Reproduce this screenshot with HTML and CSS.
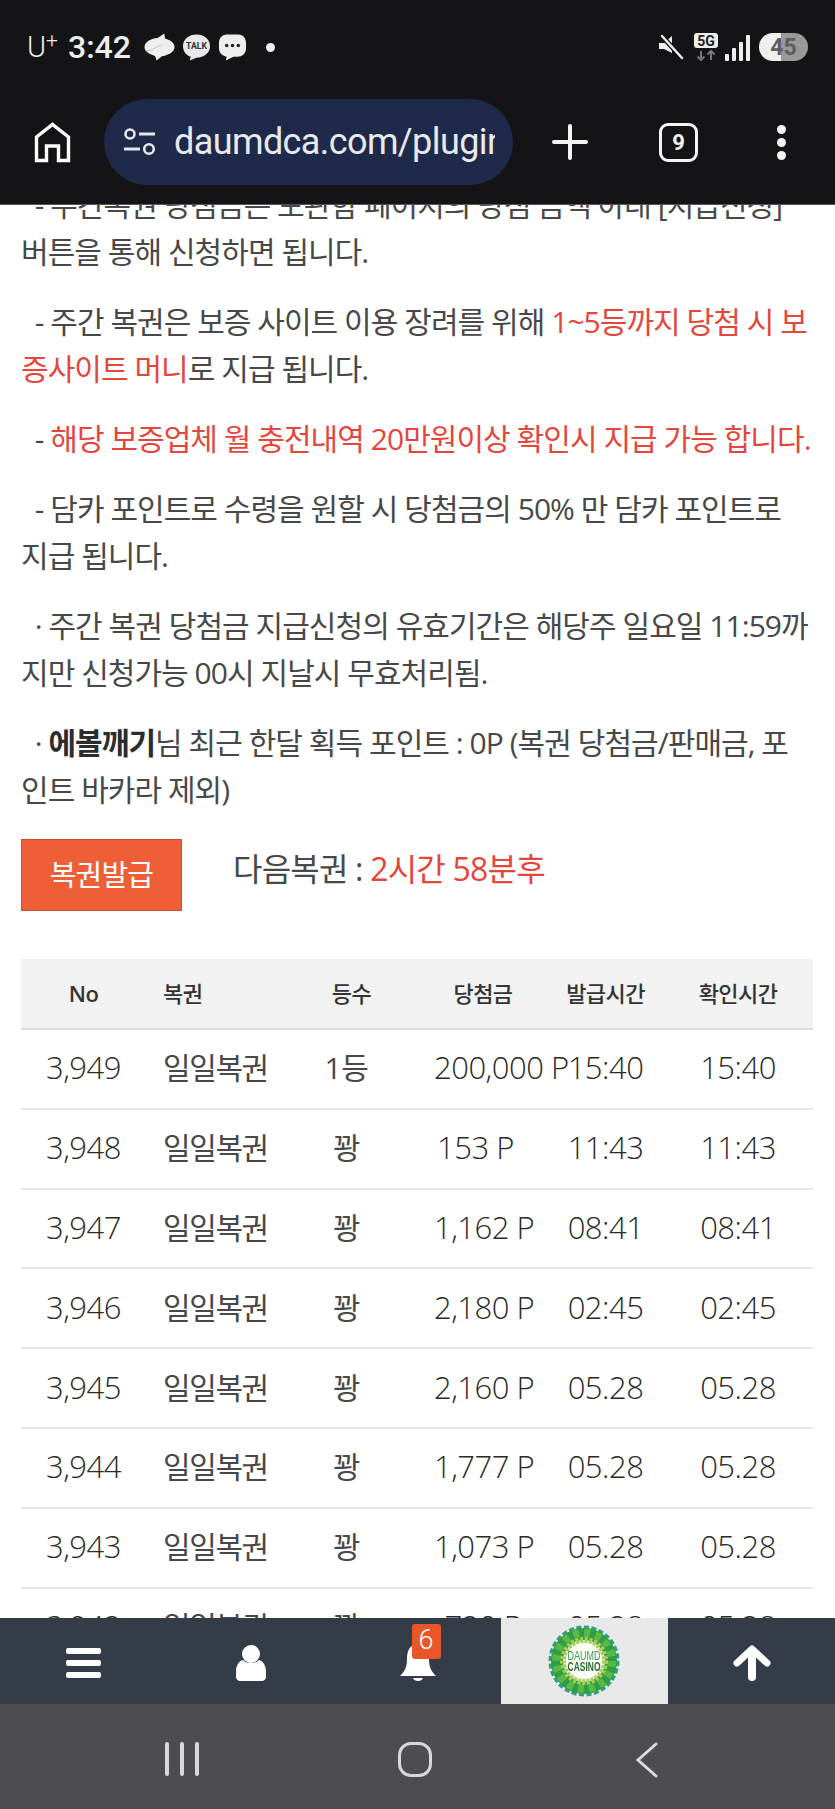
FILE: index.html
```html
<!DOCTYPE html>
<html lang="ko">
<head>
    <meta charset="UTF-8">
    <meta name="viewport" content="width=device-width, initial-scale=1.0">
    <title>복권</title>
    <link rel="stylesheet" href="styles.css">
</head>
<body>
    <div class="top-chrome">
        <div class="status-bar">
            <div class="status-left">
                <span class="carrier">U<sup>+</sup></span>
                <span class="clock">3:42</span>
                <svg class="notify-icon" width="31" height="30" viewBox="0 0 32 30"><ellipse cx="16" cy="15" rx="15.500" ry="9.500" fill="#eee"/><path d="M21 1 L9 9 L22 9 Z M13 29 L24 20 L10 20 Z" fill="#eee"/><path d="M3 19 C9 19 13 14 18 13" fill="none" stroke="#bbb" stroke-width="0.800"/></svg>
                <svg class="notify-icon" width="29" height="30" viewBox="0 0 30 30"><path d="M15 2 C7 2 1 7 1 14 C1 20 5 24 9 25 L8 29 L15 26 C23 26 29 21 29 14 C29 7 23 2 15 2 Z" fill="#e8e8e8"/><text x="15" y="17.5" class="talk-text">TALK</text></svg>
                <svg class="notify-icon" width="29" height="30" viewBox="0 0 30 30"><path d="M9 2 H21 C26 2 29 6 29 11 V16 C29 22 25 25 20 25 H16 L8 29 L9 25 C4 24 1 21 1 16 V11 C1 6 4 2 9 2 Z" fill="#eee"/><circle cx="9" cy="13.5" r="1.8" fill="#222"/><circle cx="15" cy="13.5" r="1.8" fill="#222"/><circle cx="21" cy="13.5" r="1.8" fill="#222"/></svg>
                <span class="status-dot"></span>
            </div>
            <div class="status-right">
                <svg width="26" height="26" viewBox="0 0 26 26"><path d="M1 9 H6 L14 2 V19 L6 15 H1 Z M17 7 V15" fill="#eee"/><path d="M3 1 L25 25" stroke="#141416" stroke-width="5"/><path d="M4 2 L24 24" stroke="#eee" stroke-width="2.5" stroke-linecap="round"/></svg>
                <svg class="net-icon" width="26" height="28" viewBox="0 0 26 28"><rect x="1" y="0" width="24" height="15" rx="3" fill="#eee"/><text x="13" y="12.500" class="net-text">5G</text><path d="M8 18 V27 M4.5 23.5 L8 27 L11.5 23.5 M18 27 V18 M14.500 21.500 L18 18 L21.500 21.500" stroke="#777" stroke-width="2" fill="none"/></svg>
                <svg class="signal-icon" width="26" height="27" viewBox="0 0 26 27"><rect x="0" y="20" width="4" height="7" rx="1" fill="#eee"/><rect x="7" y="14" width="4" height="13" rx="1" fill="#eee"/><rect x="14" y="8" width="4" height="19" rx="1" fill="#eee"/><rect x="21" y="1" width="4" height="26" rx="1" fill="#eee"/></svg>
                <div class="battery"><span class="battery-num">45</span></div>
            </div>
        </div>
        <div class="url-bar">
            <svg class="home-icon" width="37" height="41" viewBox="0 0 37 41"><path d="M2.500 38.500 V15 L18.500 2.500 L34.500 15 V38.500 H24.500 V24 H12.500 V38.500 Z" fill="none" stroke="#fff" stroke-width="3.400" stroke-linejoin="miter"/></svg>
            <div class="url-pill">
                <svg class="tune-icon" width="34" height="30" viewBox="0 0 34 30"><circle cx="7" cy="7" r="4.500" fill="none" stroke="#e6e8ef" stroke-width="2.600"/><path d="M16 7 H32 M1 22 H17" stroke="#e6e8ef" stroke-width="2.800"/><circle cx="26" cy="22" r="4.800" fill="none" stroke="#e6e8ef" stroke-width="2.600"/></svg>
                <span class="url-text">daumdca.com/plugin/lotto</span>
            </div>
            <svg class="plus-icon" width="36" height="36" viewBox="0 0 36 36"><path d="M18 2 V34 M2 18 H34" stroke="#f4f4f4" stroke-width="4" stroke-linecap="round"/></svg>
            <div class="tab-count">9</div>
            <div class="more-dots"><span></span><span></span><span></span></div>
        </div>
    </div>

    <div class="content-wrap">
        <div class="content">
            <p>&nbsp;&nbsp;- 주간복권 당첨금은 보관함 페이지의 당첨 금액 아래 [지급신청]<br>버튼을 통해 신청하면 됩니다.</p>
            <p>&nbsp;&nbsp;- 주간 복권은 보증 사이트 이용 장려를 위해 <span class="red">1~5등까지 당첨 시 보증사이트 머니</span>로 지급 됩니다.</p>
            <p>&nbsp;&nbsp;- <span class="red">해당 보증업체 월 충전내역 20만원이상 확인시 지급 가능 합니다.</span></p>
            <p>&nbsp;&nbsp;- 담카 포인트로 수령을 원할 시 당첨금의 50% 만 담카 포인트로<br>지급 됩니다.</p>
            <p>&nbsp;&nbsp;· 주간 복권 당첨금 지급신청의 유효기간은 해당주 일요일 11:59까지만 신청가능 00시 지날시 무효처리됨.</p>
            <p>&nbsp;&nbsp;· <b>에볼깨기</b>님 최근 한달 획득 포인트 : 0P (복권 당첨금/판매금, 포<br>인트 바카라 제외)</p>

            <div class="issue-row">
                <button class="issue-btn">복권발급</button>
                <div class="next-lotto">다음복권 : <span class="red">2시간 58분후</span></div>
            </div>

            <table class="lotto-table">
                <colgroup>
                    <col class="c-no"><col class="c-name"><col class="c-rank"><col class="c-prize"><col class="c-issued"><col class="c-checked">
                </colgroup>
                <thead>
                    <tr><th>No</th><th class="name">복권</th><th>등수</th><th class="prize">당첨금</th><th>발급시간</th><th class="checked">확인시간</th></tr>
                </thead>
                <tbody>
                    <tr><td>3,949</td><td class="name">일일복권</td><td>1등</td><td class="prize">200,000 P</td><td>15:40</td><td class="checked">15:40</td></tr>
                    <tr><td>3,948</td><td class="name">일일복권</td><td>꽝</td><td class="prize">153 P&nbsp;&nbsp;</td><td>11:43</td><td class="checked">11:43</td></tr>
                    <tr><td>3,947</td><td class="name">일일복권</td><td>꽝</td><td class="prize">1,162 P</td><td>08:41</td><td class="checked">08:41</td></tr>
                    <tr><td>3,946</td><td class="name">일일복권</td><td>꽝</td><td class="prize">2,180 P</td><td>02:45</td><td class="checked">02:45</td></tr>
                    <tr><td>3,945</td><td class="name">일일복권</td><td>꽝</td><td class="prize">2,160 P</td><td>05.28</td><td class="checked">05.28</td></tr>
                    <tr><td>3,944</td><td class="name">일일복권</td><td>꽝</td><td class="prize">1,777 P</td><td>05.28</td><td class="checked">05.28</td></tr>
                    <tr><td>3,943</td><td class="name">일일복권</td><td>꽝</td><td class="prize">1,073 P</td><td>05.28</td><td class="checked">05.28</td></tr>
                    <tr><td>3,942</td><td class="name">일일복권</td><td>꽝</td><td class="prize">720 P</td><td>05.28</td><td class="checked">05.28</td></tr>
                </tbody>
            </table>
        </div>
    </div>

    <div class="bottom-bar">
        <div class="bar-cell">
            <div class="hamburger"><span></span><span></span><span></span></div>
        </div>
        <div class="bar-cell">
            <svg width="30" height="36" viewBox="0 0 30 36"><circle cx="15" cy="9" r="9" fill="#fff"/><path d="M7 15 C10 19 20 19 23 15 C27 16 30 20 30 27 V32 C30 34 28 36 26 36 H4 C2 36 0 34 0 32 V27 C0 20 3 16 7 15 Z" fill="#fff"/></svg>
        </div>
        <div class="bar-cell">
            <div class="bell-wrap">
                <svg width="36" height="38" viewBox="0 0 36 38"><path d="M18 0 C9 0 7 8 7 15 C7 23 5 27 0 32 H36 C31 27 29 23 29 15 C29 8 27 0 18 0 Z" fill="#fff"/><path d="M13 34 C14 38 22 38 23 34 Z" fill="#fff"/></svg>
                <span class="badge">6</span>
            </div>
        </div>
        <div class="bar-cell logo-cell">
            <svg class="logo" width="72" height="72" viewBox="0 0 72 72">
                <circle cx="36" cy="36" r="33.500" fill="none" stroke="#2f9f86" stroke-width="4" stroke-dasharray="5 2.500"/>
                <circle cx="36" cy="36" r="27" fill="none" stroke="#2f9d45" stroke-width="12"/>
                <circle cx="36" cy="36" r="28" fill="none" stroke="#5ab845" stroke-width="8" stroke-dasharray="6 5"/>
                <circle cx="36" cy="36" r="21" fill="none" stroke="#a9cf52" stroke-width="6" stroke-dasharray="3 1.500"/>
                <circle cx="36" cy="36" r="18" fill="#fbfdf5"/>
                <text x="36" y="35" class="logo-text light" textLength="33" lengthAdjust="spacingAndGlyphs">DAUMD</text>
                <text x="36" y="46" class="logo-text" textLength="33" lengthAdjust="spacingAndGlyphs">CASINO</text>
            </svg>
        </div>
        <div class="bar-cell">
            <svg width="38" height="36" viewBox="0 0 38 36"><path d="M4 18 L19 4 L34 18" fill="none" stroke="#fff" stroke-width="7" stroke-linecap="round" stroke-linejoin="round"/><path d="M19 8 V32" stroke="#fff" stroke-width="8" stroke-linecap="round"/></svg>
        </div>
    </div>

    <div class="nav-bar">
        <div class="nav-recent"><span></span><span></span><span></span></div>
        <div class="nav-home"></div>
        <svg width="24" height="36" viewBox="0 0 24 36"><path d="M21 2 L3 18 L21 34" fill="none" stroke="#dcdcdc" stroke-width="3" stroke-linecap="round" stroke-linejoin="miter"/></svg>
    </div>
</body>
</html>
```

FILE: styles.css
```css
* {
    margin: 0;
    padding: 0;
    box-sizing: border-box;
}

html, body {
    height: 1809px;
    overflow: hidden;
}

body {
    font-family: "Open Sans", "Noto Sans CJK KR", sans-serif;
    background: #fff;
    color: #484848;
    display: flex;
    flex-direction: column;
}

.red {
    color: #e5463b;
}

/* phone + browser top */
.top-chrome {
    height: 205px;
    flex-shrink: 0;
    background: #141416;
    border-bottom: 1px solid #555;
}

.status-bar {
    height: 99px;
    padding: 31px 27px 0;
    display: flex;
    justify-content: space-between;
    align-items: flex-start;
}

.status-left {
    display: flex;
    align-items: center;
    height: 32px;
    color: #eee;
    font-family: Roboto, sans-serif;
}

.carrier {
    font-size: 29px;
    font-weight: 300;
    margin-right: 10px;
}

.carrier sup {
    font-size: 21px;
    line-height: 0;
    vertical-align: 10px;
}

.clock {
    font-size: 32px;
    font-weight: 500;
    margin-right: 13px;
}

.notify-icon {
    margin-right: 7px;
}

.talk-text {
    font-family: Roboto, sans-serif;
    font-size: 9px;
    font-weight: 700;
    text-anchor: middle;
    fill: #333;
}

.status-dot {
    width: 9px;
    height: 9px;
    border-radius: 50%;
    background: #eee;
    margin-left: 12px;
}

.status-right {
    display: flex;
    align-items: center;
    height: 32px;
    gap: 6px;
}

.net-icon {
    margin-left: 3px;
}

.net-text {
    font-family: Roboto, sans-serif;
    font-size: 14px;
    font-weight: 700;
    text-anchor: middle;
    fill: #222;
}

.battery {
    width: 49px;
    height: 28px;
    margin-left: 2px;
    border-radius: 14px;
    background: linear-gradient(90deg, #eee 0, #eee 44%, #999 44%, #999 100%);
    display: flex;
    align-items: center;
    justify-content: center;
}

.battery-num {
    font-family: Roboto, sans-serif;
    font-size: 23px;
    font-weight: 700;
    color: #5d5d60;
}

.url-bar {
    height: 86px;
    display: flex;
    align-items: center;
}

.home-icon {
    margin-left: 34px;
    margin-right: 33px;
}

.url-pill {
    width: 409px;
    height: 86px;
    border-radius: 43px;
    background: #1f2a4a;
    padding-left: 19px;
    padding-right: 18px;
    display: flex;
    align-items: center;
    overflow: hidden;
}

.tune-icon {
    flex-shrink: 0;
    margin-right: 17px;
}

.url-text {
    font-family: Roboto, sans-serif;
    font-size: 36px;
    letter-spacing: -0.6px;
    color: #e8eaf0;
    white-space: nowrap;
    overflow: hidden;
}

.plus-icon {
    margin-left: 39px;
}

.tab-count {
    width: 39px;
    height: 39px;
    margin-left: 71px;
    border: 3px solid #f4f4f4;
    border-radius: 9px;
    color: #f4f4f4;
    font-family: Roboto, sans-serif;
    font-size: 22px;
    font-weight: 700;
    display: flex;
    align-items: center;
    justify-content: center;
}

.more-dots {
    margin-left: 79px;
    display: flex;
    flex-direction: column;
    gap: 4px;
}

.more-dots span {
    width: 9px;
    height: 9px;
    border-radius: 50%;
    background: #f4f4f4;
}

/* page */
.content-wrap {
    flex: 1;
    overflow: hidden;
}

.content {
    margin-top: -24px;
    padding: 0 21px;
    font-size: 30px;
    font-weight: 400;
    line-height: 47px;
    letter-spacing: -0.95px;
}

.content p {
    margin-bottom: 23px;
}

.content b {
    font-weight: 700;
    color: #2c2c2c;
}

.issue-row {
    margin-top: 26px;
    display: flex;
    align-items: flex-start;
}

.issue-btn {
    width: 161px;
    height: 72px;
    padding-bottom: 4px;
    background: #ee5f37;
    border: 1px solid #c9512f;
    color: #fff;
    font-family: inherit;
    font-size: 29px;
    font-weight: 400;
    letter-spacing: -0.8px;
}

.next-lotto {
    margin-left: 51px;
    font-size: 32px;
    line-height: 60px;
    letter-spacing: -0.8px;
}

.lotto-table {
    margin-top: 48px;
    width: 792px;
    border-collapse: collapse;
    table-layout: fixed;
    letter-spacing: -0.5px;
}

.c-no { width: 125px; }
.c-name { width: 145px; }
.c-rank { width: 121px; }
.c-prize { width: 120px; }
.c-issued { width: 147px; }
.c-checked { width: 134px; }

.lotto-table th {
    height: 70px;
    background: #f2f2f2;
    border-bottom: 2px solid #ddd;
    color: #333;
    font-size: 22px;
    font-weight: 500;
    text-align: center;
    letter-spacing: -0.6px;
}

.lotto-table th:first-child {
    font-weight: 600;
}

.lotto-table td {
    height: 79.8px;
    padding-bottom: 2px;
    border-bottom: 2px solid #e6e6e6;
    color: #2a2a2a;
    font-size: 31px;
    font-weight: 300;
    text-align: center;
    white-space: nowrap;
}

.lotto-table td:nth-child(3) {
    padding-right: 10px;
    color: #484848;
    font-size: 30px;
    font-weight: 400;
}

.lotto-table .name {
    text-align: left;
    padding-left: 17px;
}

.lotto-table td.name {
    color: #484848;
    font-size: 30px;
    font-weight: 400;
    letter-spacing: -1.4px;
}

.lotto-table .prize {
    padding-left: 22px;
}

.lotto-table .checked {
    padding-right: 16px;
}

/* site bottom menu */
.bottom-bar {
    height: 86px;
    flex-shrink: 0;
    background: #343c47;
    display: flex;
    position: relative;
}

.bar-cell {
    width: 167px;
    display: flex;
    align-items: center;
    justify-content: center;
    padding-top: 4px;
}

.hamburger {
    display: flex;
    flex-direction: column;
    gap: 6px;
}

.hamburger span {
    width: 35px;
    height: 6px;
    border-radius: 2px;
    background: #fff;
}

.bell-wrap {
    position: relative;
    line-height: 0;
}

.badge {
    position: absolute;
    top: -20px;
    left: 12px;
    width: 29px;
    height: 35px;
    border-radius: 3px;
    background: #e9562a;
    color: #fff;
    font-family: Roboto, sans-serif;
    font-size: 27px;
    font-weight: 300;
    line-height: 32px;
    text-align: center;
}

.logo-cell {
    background: #e8e8e8;
    padding-top: 0;
    padding-right: 2px;
}

.logo {
    filter: blur(0.4px);
}

.logo-text {
    font-family: "Liberation Sans", sans-serif;
    font-size: 12px;
    font-weight: 700;
    text-anchor: middle;
    fill: #2b6b3a;
}

.logo-text.light {
    font-weight: 400;
    fill: #3a9a55;
}

/* android nav */
.nav-bar {
    height: 105px;
    flex-shrink: 0;
    background: #4d4c51;
    display: flex;
    align-items: flex-start;
    padding-top: 38px;
    padding-left: 165px;
}

.nav-recent {
    display: flex;
    gap: 11px;
    margin-right: 199px;
}

.nav-recent span {
    width: 4px;
    height: 34px;
    border-radius: 2px;
    background: #d8d8d8;
}

.nav-home {
    width: 34px;
    height: 35px;
    border: 3px solid #d8d8d8;
    border-radius: 13px;
    margin-right: 203px;
}
```
